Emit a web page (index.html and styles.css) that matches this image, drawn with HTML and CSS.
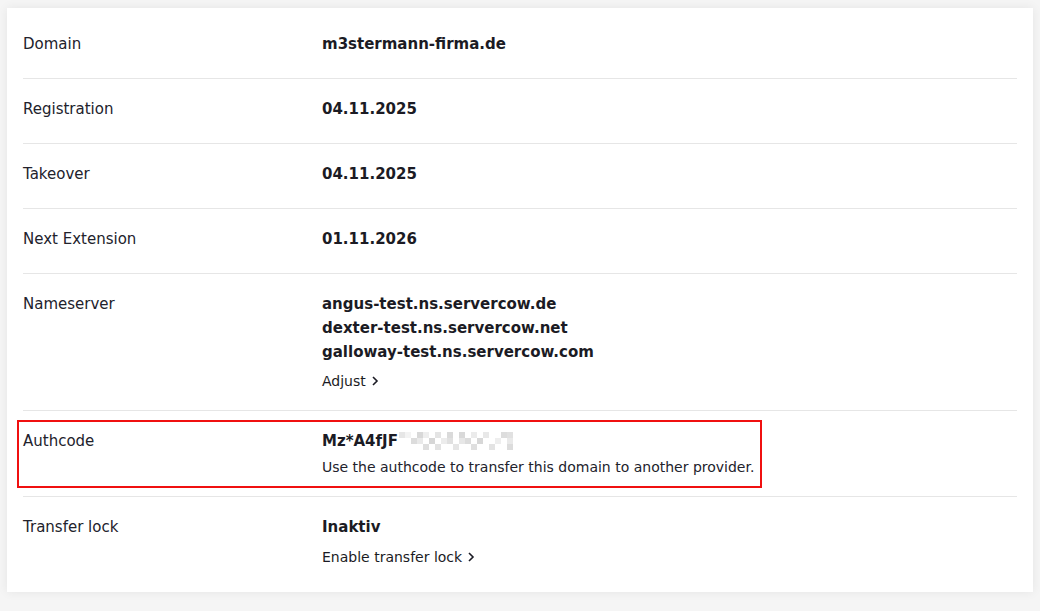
FILE: index.html
```html
<!DOCTYPE html>
<html lang="en">
<head>
<meta charset="utf-8">
<title>Domain details</title>
<link rel="stylesheet" href="styles.css">
</head>
<body>
<div class="card">
  <div class="row">
    <div class="label">Domain</div>
    <div class="value"><div class="main">m3stermann-firma.de</div></div>
  </div>
  <div class="row">
    <div class="label">Registration</div>
    <div class="value"><div class="main">04.11.2025</div></div>
  </div>
  <div class="row">
    <div class="label">Takeover</div>
    <div class="value"><div class="main">04.11.2025</div></div>
  </div>
  <div class="row">
    <div class="label">Next Extension</div>
    <div class="value"><div class="main">01.11.2026</div></div>
  </div>
  <div class="row">
    <div class="label">Nameserver</div>
    <div class="value">
      <div class="main">angus-test.ns.servercow.de</div>
      <div class="main">dexter-test.ns.servercow.net</div>
      <div class="main">galloway-test.ns.servercow.com</div>
      <a class="link" href="#">Adjust <svg class="chev" width="8" height="10" viewBox="0 0 8 10"><polyline points="2,1 6,5 2,9" fill="none" stroke="currentColor" stroke-width="1.6"/></svg></a>
    </div>
  </div>
  <div class="row highlight">
    <div class="label">Authcode</div>
    <div class="value">
      <div class="main code">Mz*A4fJF<svg class="mosaic" width="118" height="22" viewBox="0 0 118 22">
        <rect x="0" y="2" width="6" height="6" fill="#e6e6e6"/>
        <rect x="6" y="2" width="6" height="6" fill="#f3f3f3"/>
        <rect x="12" y="8" width="6" height="6" fill="#dcdcdc"/>
        <rect x="18" y="2" width="6" height="6" fill="#d8d8d8"/>
        <rect x="18" y="8" width="6" height="6" fill="#e9e9e9"/>
        <rect x="24" y="2" width="6" height="6" fill="#eeeeee"/>
        <rect x="24" y="14" width="6" height="6" fill="#dedede"/>
        <rect x="30" y="8" width="6" height="6" fill="#d6d6d6"/>
        <rect x="36" y="2" width="6" height="6" fill="#e4e4e4"/>
        <rect x="36" y="14" width="6" height="6" fill="#e2e2e2"/>
        <rect x="42" y="8" width="6" height="6" fill="#ececec"/>
        <rect x="48" y="2" width="6" height="6" fill="#dadada"/>
        <rect x="48" y="8" width="6" height="6" fill="#e0e0e0"/>
        <rect x="54" y="14" width="6" height="6" fill="#e5e5e5"/>
        <rect x="60" y="2" width="6" height="6" fill="#d9d9d9"/>
        <rect x="60" y="8" width="6" height="6" fill="#e7e7e7"/>
        <rect x="66" y="8" width="6" height="6" fill="#dcdcdc"/>
        <rect x="72" y="2" width="6" height="6" fill="#ebebeb"/>
        <rect x="72" y="14" width="6" height="6" fill="#dfdfdf"/>
        <rect x="78" y="8" width="6" height="6" fill="#d7d7d7"/>
        <rect x="84" y="2" width="6" height="6" fill="#e8e8e8"/>
        <rect x="90" y="14" width="6" height="6" fill="#e3e3e3"/>
        <rect x="96" y="8" width="6" height="6" fill="#eeeeee"/>
        <rect x="102" y="2" width="6" height="6" fill="#dddddd"/>
        <rect x="108" y="2" width="6" height="6" fill="#e1e1e1"/>
        <rect x="108" y="8" width="6" height="6" fill="#e9e9e9"/>
        <rect x="108" y="14" width="6" height="6" fill="#dcdcdc"/>
      </svg></div>
      <div class="desc">Use the authcode to transfer this domain to another provider.</div>
    </div>
    <div class="mark"></div>
  </div>
  <div class="row last">
    <div class="label">Transfer lock</div>
    <div class="value">
      <div class="main">Inaktiv</div>
      <a class="link" href="#">Enable transfer lock <svg class="chev" width="8" height="10" viewBox="0 0 8 10"><polyline points="2,1 6,5 2,9" fill="none" stroke="currentColor" stroke-width="1.6"/></svg></a>
    </div>
  </div>
</div>
</body>
</html>
```

FILE: styles.css
```css
* { box-sizing: border-box; }

html, body {
  margin: 0;
  padding: 0;
}

body {
  background: #f5f5f5;
  padding: 8px 7px;
  font-family: "DejaVu Sans", "Open Sans", sans-serif;
  color: #1e1e28;
}

.card {
  background: #ffffff;
  width: 1026px;
  padding: 6px 16px 5px;
  box-shadow: 0 0 10px rgba(0, 0, 0, 0.07);
}

.row {
  position: relative;
  display: grid;
  grid-template-columns: 299px 1fr;
  padding: 18px 0 19px;
  min-height: 65px;
  border-bottom: 1px solid #e6e6e6;
}

.row.last {
  border-bottom: none;
  padding-bottom: 20px;
}

.label {
  font-size: 15px;
  line-height: 24px;
  color: #22222c;
}

.value {
  display: flex;
  flex-direction: column;
  align-items: flex-start;
}

.main {
  font-size: 15px;
  line-height: 24px;
  font-weight: 700;
  color: #1b1b24;
}

.code {
  display: flex;
  align-items: center;
}

.mosaic {
  display: block;
  margin-left: 1px;
}

.desc {
  margin-top: 4px;
  font-size: 14px;
  line-height: 20px;
  color: #22222c;
}

.link {
  margin-top: 7px;
  font-size: 14px;
  line-height: 20px;
  color: #1b1b24;
  text-decoration: none;
  display: inline-flex;
  align-items: center;
  gap: 5px;
}

.last .link {
  margin-top: 8px;
}

.chev {
  display: block;
}

.mark {
  position: absolute;
  left: -6px;
  top: 9px;
  width: 745px;
  height: 68px;
  border: 2px solid #f01010;
  pointer-events: none;
}
```
